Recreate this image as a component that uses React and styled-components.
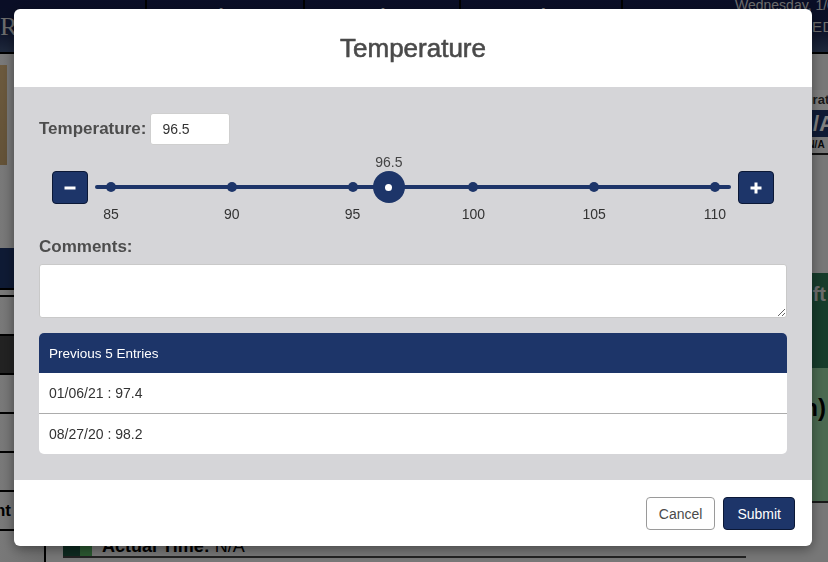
import { useState } from "react";
import styled, { createGlobalStyle } from "styled-components";

const navy = "#1d3569";

const GlobalStyle = createGlobalStyle`
  html, body {
    margin: 0;
    padding: 0;
  }
  body {
    font-family: "Liberation Sans", Arial, sans-serif;
    overflow: hidden;
  }
  * {
    box-sizing: border-box;
  }
`;

/* ---------- page behind the dialog ---------- */

const Page = styled.div`
  width: 828px;
  height: 562px;
  overflow: hidden;
  background: #eeeeee;
  display: flex;
  flex-direction: column;
`;

const Header = styled.header`
  height: 54px;
  flex-shrink: 0;
  display: flex;
  background: linear-gradient(180deg, #141c4c 0%, #17214f 55%, #3d5178 100%);
  border-bottom: 2px solid #000;
`;

const NavCell = styled.div`
  width: ${(p) => p.$width}px;
  flex-shrink: 0;
  border-right: 2px solid #000;
  color: #fff;
  font-size: 28px;
  text-align: center;
  padding-top: 3px;
  overflow: hidden;
  white-space: nowrap;
`;

const Logo = styled(NavCell)`
  font-family: "Liberation Serif", serif;
  font-size: 26px;
  color: #d9d9d9;
  text-align: left;
  padding-top: 12px;
  letter-spacing: 1px;
`;

const DateCell = styled.div`
  flex: 1;
  color: #dcdcdc;
  padding-left: 112px;
  margin-top: -3px;
  font-size: 14px;
  line-height: 16px;
  white-space: nowrap;
  overflow: hidden;
`;

const DateSub = styled.div`
  margin-top: 6px;
  padding-left: 64px;
  font-size: 15px;
  letter-spacing: 0.5px;
`;

const Main = styled.div`
  flex: 1;
  display: flex;
  min-height: 0;
`;

const Sidebar = styled.aside`
  width: 46px;
  flex-shrink: 0;
  border-right: 2px solid #000;
  display: flex;
  flex-direction: column;
  background: linear-gradient(90deg, #f2f2f2, #dcdcdc);
`;

const Photo = styled.div`
  margin-top: 11px;
  height: 100px;
  width: 7px;
  background: linear-gradient(180deg, #d8b47c, #c7a46e);
`;

const SideBand = styled.div`
  margin-top: 83px;
  height: 42px;
  flex-shrink: 0;
  background: ${navy};
  border-bottom: 2px solid #000;
`;

const SideGap = styled.div`
  height: 7px;
  flex-shrink: 0;
  border-bottom: 2px solid #000;
`;

const SideRow = styled.div`
  height: 39px;
  flex-shrink: 0;
  border-bottom: 2px solid #000;
  background: ${(p) => (p.$dark ? "#454545" : "transparent")};
  display: flex;
  justify-content: flex-end;
  align-items: center;
  padding-right: 33px;
  white-space: nowrap;
  font-weight: bold;
  font-size: 17px;
  color: #000;
`;

const Center = styled.div`
  flex: 1;
  min-width: 0;
  display: flex;
  flex-direction: column;
  justify-content: flex-end;
`;

const StatusCard = styled.div`
  height: 36px;
  margin: 0 0 4px 17px;
  display: flex;
  border-bottom: 2px solid #444;
`;

const Stripe = styled.div`
  width: ${(p) => p.$width}px;
  background: ${(p) => p.$color};
`;

const StatusText = styled.div`
  padding: 14px 10px 0;
  font-size: 18px;
  color: #000;
  white-space: nowrap;
  b {
    font-weight: bold;
  }
`;

const RightPanel = styled.aside`
  width: 140px;
  margin-right: -58px;
  flex-shrink: 0;
  display: flex;
  flex-direction: column;
  text-align: center;
  padding-top: 36px;
`;

const PanelLabel = styled.div`
  height: 20px;
  font-size: 13px;
  font-weight: bold;
  color: #333;
  background: #f8f8f8;
  line-height: 20px;
  padding-left: 12px;
`;

const PanelValue = styled.div`
  height: 27px;
  background: ${navy};
  color: #fff;
  font-weight: bold;
  font-size: 22px;
  line-height: 27px;
`;

const PanelSub = styled.div`
  height: 18px;
  font-size: 10px;
  font-weight: bold;
  color: #111;
  border-bottom: 2px solid #222;
  line-height: 16px;
`;

const ShiftBox = styled.div`
  height: ${(p) => p.$height}px;
  background: ${(p) => p.$bg};
  color: ${(p) => p.$color};
  font-size: ${(p) => p.$size}px;
  font-weight: bold;
  display: flex;
  justify-content: flex-end;
  align-items: flex-start;
  white-space: nowrap;
  padding: ${(p) => p.$top}px 60px 0 0;
`;

const ShiftTop = styled(ShiftBox)`
  margin-top: 118px;
`;

const ShiftBody = styled(ShiftBox)`
  border-bottom: 2px solid #333;
`;

/* ---------- dialog ---------- */

const Overlay = styled.div`
  position: fixed;
  inset: 0;
  background: rgba(0, 0, 0, 0.5);
  display: flex;
  justify-content: center;
  align-items: flex-start;
  padding: 9px 2px 0 0;
`;

const Modal = styled.div`
  width: 798px;
  background: #fff;
  border-radius: 6px;
  overflow: hidden;
  box-shadow: 0 3px 12px rgba(0, 0, 0, 0.4);
`;

const ModalHeader = styled.div`
  height: 78px;
  display: flex;
  align-items: center;
  justify-content: center;
`;

const Title = styled.h2`
  margin: 0;
  font-size: 26px;
  font-weight: normal;
  color: #4a4a4a;
  -webkit-text-stroke: 0.6px #4a4a4a;
`;

const ModalBody = styled.div`
  background: #d5d5d8;
  padding: 26px 25px 26px;
`;

const FieldRow = styled.div`
  display: flex;
  align-items: center;
  gap: 4px;
`;

const Label = styled.label`
  display: block;
  font-size: 17px;
  font-weight: bold;
  color: #4d4d4d;
  line-height: 20px;
`;

const CommentsLabel = styled(Label)`
  margin-top: 17px;
`;

const NumberInput = styled.input`
  width: 80px;
  height: 32px;
  border: 1px solid #cfcfcf;
  border-radius: 3px;
  padding: 0 11px;
  font-family: inherit;
  font-size: 14px;
  color: #333;
  background: #fff;
  outline: none;
`;

const SliderRow = styled.div`
  margin-top: 10px;
  height: 65px;
  padding: 0 13px;
  display: flex;
  align-items: center;
  gap: 7px;
`;

const StepButton = styled.button`
  width: 36px;
  height: 33px;
  flex-shrink: 0;
  background: ${navy};
  border: 1px solid #0b1836;
  border-radius: 4px;
  padding: 0;
  display: flex;
  align-items: center;
  justify-content: center;
  cursor: pointer;
`;

const Track = styled.div`
  position: relative;
  flex: 1;
  height: 65px;
`;

const Rail = styled.div`
  position: absolute;
  left: 0;
  right: 0;
  top: 30px;
  height: 4px;
  border-radius: 2px;
  background: ${navy};
`;

const Tick = styled.div`
  position: absolute;
  top: 0;
  width: 0;
  height: 65px;
`;

const TickDot = styled.span`
  position: absolute;
  left: -5px;
  top: 27px;
  width: 10px;
  height: 10px;
  border-radius: 50%;
  background: ${navy};
`;

const TickText = styled.span`
  position: absolute;
  top: 51px;
  left: -20px;
  width: 40px;
  text-align: center;
  font-size: 14px;
  line-height: 16px;
  color: #333;
`;

const Thumb = styled.div`
  position: absolute;
  left: -16px;
  top: 16px;
  width: 32px;
  height: 32px;
  border-radius: 50%;
  background: ${navy};
  display: flex;
  align-items: center;
  justify-content: center;
  &::after {
    content: "";
    width: 7px;
    height: 7px;
    border-radius: 50%;
    background: #fff;
  }
`;

const ThumbValue = styled.span`
  position: absolute;
  top: -1px;
  left: -25px;
  width: 50px;
  text-align: center;
  font-size: 14px;
  line-height: 16px;
  color: #444;
`;

const Comments = styled.textarea`
  display: block;
  margin-top: 7px;
  width: 100%;
  height: 54px;
  border: 1px solid #c9c9c9;
  border-radius: 3px;
  background: #fff;
  resize: vertical;
  font-family: inherit;
  font-size: 14px;
  padding: 6px 10px;
  outline: none;
`;

const EntriesCard = styled.div`
  margin-top: 15px;
  background: #fff;
  border-radius: 5px;
  overflow: hidden;
`;

const EntriesHeader = styled.div`
  height: 40px;
  background: ${navy};
  color: #fff;
  font-size: 13.5px;
  padding: 0 10px;
  display: flex;
  align-items: center;
`;

const EntryRow = styled.div`
  height: ${(p) => (p.$first ? 40 : 41)}px;
  padding: 0 10px;
  display: flex;
  align-items: center;
  font-size: 14px;
  color: #333;
  border-top: ${(p) => (p.$first ? "none" : "1px solid #acacac")};
`;

const ModalFooter = styled.div`
  padding: 17px 17px 16px;
  display: flex;
  justify-content: flex-end;
  gap: 8px;
`;

const FooterButton = styled.button`
  height: 33px;
  padding: 0 ${(p) => (p.$primary ? 13 : 12)}px;
  border-radius: 4px;
  font-family: inherit;
  font-size: 14px;
  cursor: pointer;
  background: ${(p) => (p.$primary ? navy : "#fff")};
  color: ${(p) => (p.$primary ? "#fff" : "#4a4a4a")};
  border: 1px solid ${(p) => (p.$primary ? "#0b1836" : "#9a9a9a")};
`;

const MIN = 85;
const MAX = 110;
const ticks = [85, 90, 95, 100, 105, 110];
const entries = ["01/06/21 : 97.4", "08/27/20 : 98.2"];

const pos = (v) => `calc(16px + (100% - 32px) * ${(v - MIN) / (MAX - MIN)})`;

const MinusIcon = () => (
  <svg width="12" height="12" viewBox="0 0 12 12">
    <rect x="0.5" y="4.5" width="11" height="3" fill="#fff" />
  </svg>
);

const PlusIcon = () => (
  <svg width="12" height="12" viewBox="0 0 12 12">
    <rect x="0.5" y="4.5" width="11" height="3" fill="#fff" />
    <rect x="4.5" y="0.5" width="3" height="11" fill="#fff" />
  </svg>
);

const App = () => {
  const [temp, setTemp] = useState(96.5);
  const step = (d) =>
    setTemp((t) => Math.min(MAX, Math.max(MIN, Math.round((t + d) * 10) / 10)));

  return (
    <>
      <GlobalStyle />
      <Page>
        <Header>
          <Logo $width={147}>RIVERVIEW</Logo>
          <NavCell $width={158}>Mine</NavCell>
          <NavCell $width={156}>Uhr</NavCell>
          <NavCell $width={162}>Print</NavCell>
          <DateCell>
            Wednesday, 1/06/2021
            <DateSub>MEDICATIONS</DateSub>
          </DateCell>
        </Header>
        <Main>
          <Sidebar>
            <Photo />
            <SideBand />
            <SideGap />
            <SideRow />
            <SideRow $dark />
            <SideRow />
            <SideRow />
            <SideRow />
            <SideRow>Assessment</SideRow>
          </Sidebar>
          <Center>
            <StatusCard>
              <Stripe $width={17} $color="#1c5440" />
              <Stripe $width={12} $color="#56b062" />
              <StatusText>
                <b>Actual Time:</b> N/A
              </StatusText>
            </StatusCard>
          </Center>
          <RightPanel>
            <PanelLabel>Duration</PanelLabel>
            <PanelValue>N/A</PanelValue>
            <PanelSub>N/A</PanelSub>
            <ShiftTop $height={95} $bg="#2e7856" $color="#d8d8d8" $size={20} $top={10}>
              Day Shift
            </ShiftTop>
            <ShiftBody $height={135} $bg="#94d2a0" $color="#000" $size={24} $top={26}>
              (Afternoon)
            </ShiftBody>
          </RightPanel>
        </Main>
      </Page>

      <Overlay>
        <Modal>
          <ModalHeader>
            <Title>Temperature</Title>
          </ModalHeader>
          <ModalBody>
            <FieldRow>
              <Label>Temperature:</Label>
              <NumberInput
                value={temp}
                onChange={(e) => setTemp(Number(e.target.value) || MIN)}
              />
            </FieldRow>

            <SliderRow>
              <StepButton onClick={() => step(-0.1)}>
                <MinusIcon />
              </StepButton>
              <Track>
                <Rail />
                {ticks.map((t) => (
                  <Tick key={t} style={{ left: pos(t) }}>
                    <TickDot />
                    <TickText>{t}</TickText>
                  </Tick>
                ))}
                <Tick style={{ left: pos(temp) }}>
                  <ThumbValue>{temp}</ThumbValue>
                  <Thumb />
                </Tick>
              </Track>
              <StepButton onClick={() => step(0.1)}>
                <PlusIcon />
              </StepButton>
            </SliderRow>

            <CommentsLabel>Comments:</CommentsLabel>
            <Comments />

            <EntriesCard>
              <EntriesHeader>Previous 5 Entries</EntriesHeader>
              {entries.map((e, i) => (
                <EntryRow key={e} $first={i === 0}>
                  {e}
                </EntryRow>
              ))}
            </EntriesCard>
          </ModalBody>
          <ModalFooter>
            <FooterButton>Cancel</FooterButton>
            <FooterButton $primary>Submit</FooterButton>
          </ModalFooter>
        </Modal>
      </Overlay>
    </>
  );
};

export default App;
